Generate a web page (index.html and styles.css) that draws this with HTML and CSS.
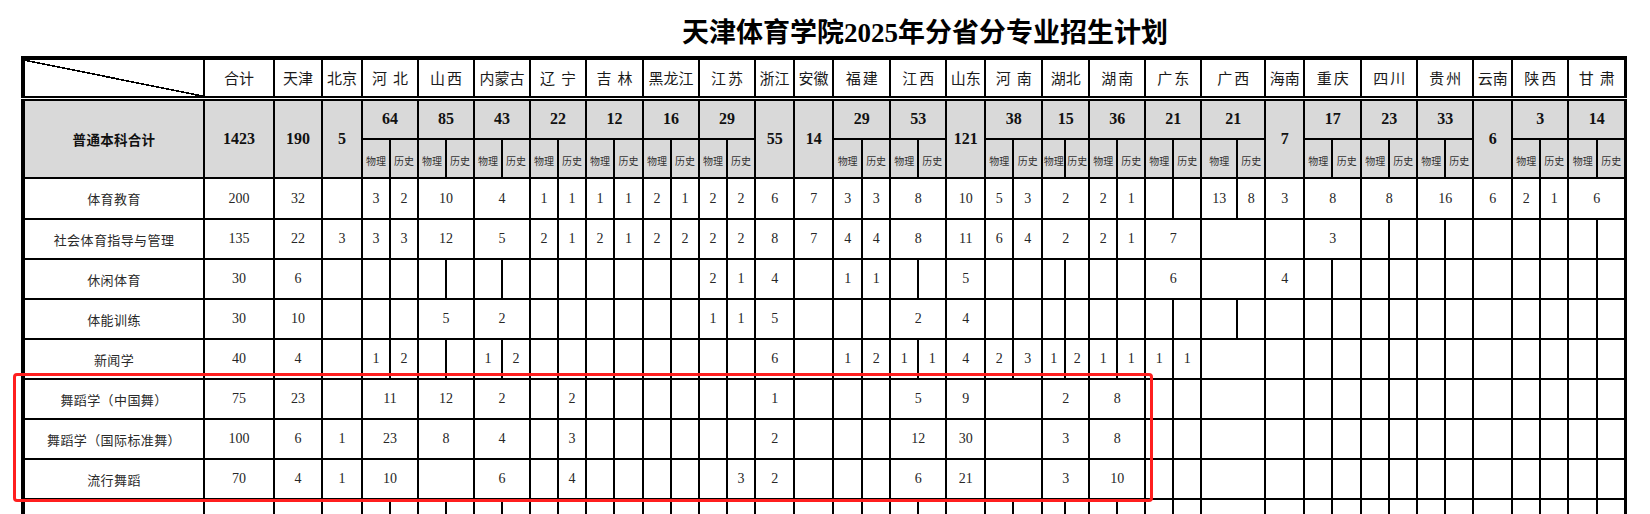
FILE: index.html
```html
<!DOCTYPE html>
<html lang="zh-CN">
<head>
<meta charset="utf-8">
<title>天津体育学院2025年分省分专业招生计划</title>
<link rel="stylesheet" href="styles.css">
</head>
<body>
<div class="page">
  <h1 class="title">天津体育学院2025年分省分专业招生计划</h1>
  <table class="plan">
    <colgroup>
      <col class="c-label"><col class="c-sum"><col class="c-tj"><col class="c-bj">
      <col class="c28"><col class="c28">
      <col class="c28"><col class="c28">
      <col class="c28"><col class="c28">
      <col class="c28"><col class="c28">
      <col class="c28"><col class="c29">
      <col class="c28"><col class="c28">
      <col class="c28"><col class="c28">
      <col class="c39"><col class="c39">
      <col class="c29"><col class="c28">
      <col class="c28"><col class="c28">
      <col class="c39">
      <col class="c28"><col class="c29">
      <col class="c23"><col class="c24">
      <col class="c28"><col class="c28">
      <col class="c28"><col class="c28">
      <col class="c36"><col class="c28">
      <col class="c39">
      <col class="c28"><col class="c29">
      <col class="c28"><col class="c28">
      <col class="c28"><col class="c28">
      <col class="c39">
      <col class="c28"><col class="c28">
      <col class="c29"><col class="c28">
    </colgroup>
    <tbody>
      <tr class="names">
        <td class="diag"></td><td>合计</td><td>天津</td><td>北京</td>
        <td colspan="2" class="ws">河北</td><td colspan="2" class="wm">山西</td><td colspan="2">内蒙古</td><td colspan="2" class="ws">辽宁</td>
        <td colspan="2" class="ws">吉林</td><td colspan="2">黑龙江</td><td colspan="2" class="wm">江苏</td><td>浙江</td><td>安徽</td>
        <td colspan="2" class="wm">福建</td><td colspan="2" class="wm">江西</td><td>山东</td><td colspan="2" class="ws">河南</td>
        <td colspan="2">湖北</td><td colspan="2" class="wm">湖南</td><td colspan="2" class="wm">广东</td><td colspan="2" class="wm">广西</td>
        <td>海南</td><td colspan="2" class="wm">重庆</td><td colspan="2" class="wm">四川</td><td colspan="2" class="wm">贵州</td>
        <td>云南</td><td colspan="2" class="wm">陕西</td><td colspan="2" class="ws">甘肃</td>
      </tr>
      <tr class="tot">
        <td rowspan="2" class="sum-label">普通本科合计</td><td rowspan="2">1423</td><td rowspan="2">190</td><td rowspan="2">5</td>
        <td colspan="2">64</td><td colspan="2">85</td><td colspan="2">43</td><td colspan="2">22</td>
        <td colspan="2">12</td><td colspan="2">16</td><td colspan="2">29</td><td rowspan="2">55</td><td rowspan="2">14</td>
        <td colspan="2">29</td><td colspan="2">53</td><td rowspan="2">121</td><td colspan="2">38</td>
        <td colspan="2">15</td><td colspan="2">36</td><td colspan="2">21</td><td colspan="2">21</td>
        <td rowspan="2">7</td><td colspan="2">17</td><td colspan="2">23</td><td colspan="2">33</td>
        <td rowspan="2">6</td><td colspan="2">3</td><td colspan="2">14</td>
      </tr>
      <tr class="subs">
        <td>物理</td><td>历史</td><td>物理</td><td>历史</td><td>物理</td><td>历史</td><td>物理</td><td>历史</td>
        <td>物理</td><td>历史</td><td>物理</td><td>历史</td><td>物理</td><td>历史</td>
        <td>物理</td><td>历史</td><td>物理</td><td>历史</td>
        <td>物理</td><td>历史</td><td>物理</td><td>历史</td><td>物理</td><td>历史</td><td>物理</td><td>历史</td><td>物理</td><td>历史</td>
        <td>物理</td><td>历史</td><td>物理</td><td>历史</td><td>物理</td><td>历史</td>
        <td>物理</td><td>历史</td><td>物理</td><td>历史</td>
      </tr>
      <tr class="row first">
        <td class="l">体育教育</td><td>200</td><td>32</td><td></td>
        <td>3</td><td>2</td><td colspan="2">10</td><td colspan="2">4</td><td>1</td><td>1</td>
        <td>1</td><td>1</td><td>2</td><td>1</td><td>2</td><td>2</td><td>6</td><td>7</td>
        <td>3</td><td>3</td><td colspan="2">8</td><td>10</td><td>5</td><td>3</td>
        <td colspan="2">2</td><td>2</td><td>1</td><td></td><td></td><td>13</td><td>8</td>
        <td>3</td><td colspan="2">8</td><td colspan="2">8</td><td colspan="2">16</td>
        <td>6</td><td>2</td><td>1</td><td colspan="2">6</td>
      </tr>
      <tr class="row">
        <td class="l">社会体育指导与管理</td><td>135</td><td>22</td><td>3</td>
        <td>3</td><td>3</td><td colspan="2">12</td><td colspan="2">5</td><td>2</td><td>1</td>
        <td>2</td><td>1</td><td>2</td><td>2</td><td>2</td><td>2</td><td>8</td><td>7</td>
        <td>4</td><td>4</td><td colspan="2">8</td><td>11</td><td>6</td><td>4</td>
        <td colspan="2">2</td><td>2</td><td>1</td><td colspan="2">7</td><td colspan="2"></td>
        <td></td><td colspan="2">3</td><td></td><td></td><td></td><td></td>
        <td></td><td></td><td></td><td></td><td></td>
      </tr>
      <tr class="row">
        <td class="l">休闲体育</td><td>30</td><td>6</td><td></td>
        <td></td><td></td><td></td><td></td><td></td><td></td><td></td><td></td>
        <td></td><td></td><td></td><td></td><td>2</td><td>1</td><td>4</td><td></td>
        <td>1</td><td>1</td><td></td><td></td><td>5</td><td></td><td></td>
        <td></td><td></td><td></td><td></td><td colspan="2">6</td><td colspan="2"></td>
        <td>4</td><td></td><td></td><td></td><td></td><td></td><td></td>
        <td></td><td></td><td></td><td></td><td></td>
      </tr>
      <tr class="row">
        <td class="l">体能训练</td><td>30</td><td>10</td><td></td>
        <td></td><td></td><td colspan="2">5</td><td colspan="2">2</td><td></td><td></td>
        <td></td><td></td><td></td><td></td><td>1</td><td>1</td><td>5</td><td></td>
        <td></td><td></td><td colspan="2">2</td><td>4</td><td></td><td></td>
        <td></td><td></td><td></td><td></td><td></td><td></td><td></td><td></td>
        <td></td><td></td><td></td><td></td><td></td><td></td><td></td>
        <td></td><td></td><td></td><td></td><td></td>
      </tr>
      <tr class="row">
        <td class="l">新闻学</td><td>40</td><td>4</td><td></td>
        <td>1</td><td>2</td><td></td><td></td><td>1</td><td>2</td><td></td><td></td>
        <td></td><td></td><td></td><td></td><td></td><td></td><td>6</td><td></td>
        <td>1</td><td>2</td><td>1</td><td>1</td><td>4</td><td>2</td><td>3</td>
        <td>1</td><td>2</td><td>1</td><td>1</td><td>1</td><td>1</td><td colspan="2"></td>
        <td></td><td></td><td></td><td></td><td></td><td></td><td></td>
        <td></td><td></td><td></td><td></td><td></td>
      </tr>
      <tr class="row">
        <td class="l">舞蹈学（中国舞）</td><td>75</td><td>23</td><td></td>
        <td colspan="2">11</td><td colspan="2">12</td><td colspan="2">2</td><td></td><td>2</td>
        <td></td><td></td><td></td><td></td><td></td><td></td><td>1</td><td></td>
        <td></td><td></td><td colspan="2">5</td><td>9</td><td colspan="2"></td>
        <td colspan="2">2</td><td colspan="2">8</td><td></td><td></td><td colspan="2"></td>
        <td></td><td></td><td></td><td></td><td></td><td></td><td></td>
        <td></td><td></td><td></td><td></td><td></td>
      </tr>
      <tr class="row">
        <td class="l">舞蹈学（国际标准舞）</td><td>100</td><td>6</td><td>1</td>
        <td colspan="2">23</td><td colspan="2">8</td><td colspan="2">4</td><td></td><td>3</td>
        <td></td><td></td><td></td><td></td><td></td><td></td><td>2</td><td></td>
        <td></td><td></td><td colspan="2">12</td><td>30</td><td colspan="2"></td>
        <td colspan="2">3</td><td colspan="2">8</td><td></td><td></td><td colspan="2"></td>
        <td></td><td></td><td></td><td></td><td></td><td></td><td></td>
        <td></td><td></td><td></td><td></td><td></td>
      </tr>
      <tr class="row">
        <td class="l">流行舞蹈</td><td>70</td><td>4</td><td>1</td>
        <td colspan="2">10</td><td colspan="2"></td><td colspan="2">6</td><td></td><td>4</td>
        <td></td><td></td><td></td><td></td><td></td><td>3</td><td>2</td><td></td>
        <td></td><td></td><td colspan="2">6</td><td>21</td><td colspan="2"></td>
        <td colspan="2">3</td><td colspan="2">10</td><td></td><td></td><td colspan="2"></td>
        <td></td><td></td><td></td><td></td><td></td><td></td><td></td>
        <td></td><td></td><td></td><td></td><td></td>
      </tr>
      <tr class="row">
        <td class="l"></td><td></td><td></td><td></td>
        <td></td><td></td><td></td><td></td><td></td><td></td><td></td><td></td>
        <td></td><td></td><td></td><td></td><td></td><td></td><td></td><td></td>
        <td></td><td></td><td></td><td></td><td></td><td></td><td></td>
        <td></td><td></td><td></td><td></td><td></td><td></td><td colspan="2"></td>
        <td></td><td></td><td></td><td></td><td></td><td></td><td></td>
        <td></td><td></td><td></td><td></td><td></td>
      </tr>
    </tbody>
  </table>
  <div class="mark" aria-hidden="true"></div>
</div>
</body>
</html>
```
FILE: styles.css
```css
* {
  box-sizing: border-box;
}

html, body {
  margin: 0;
  padding: 0;
  background: #ffffff;
}

body {
  font-family: "Liberation Serif", "Noto Sans CJK SC", serif;
  color: #111111;
}

.page {
  position: relative;
  width: 1650px;
  height: 514px;
  padding-left: 21px;
  overflow: hidden;
}

.title {
  margin: 0;
  height: 56px;
  padding: 18px 0 0 661px;
  font-size: 27px;
  line-height: 30px;
  font-weight: 700;
  white-space: nowrap;
  color: #000000;
}

.plan {
  border-collapse: collapse;
  table-layout: fixed;
  width: 1606px;
  border-top: 4px solid #000;
  border-left: 4px solid #000;
  border-right: 3px solid #000;
}

.c-label { width: 181px; }
.c-sum { width: 70px; }
.c-tj { width: 48px; }
.c-bj { width: 40px; }
.c23 { width: 23px; }
.c24 { width: 24px; }
.c28 { width: 28px; }
.c29 { width: 29px; }
.c36 { width: 36px; }
.c39 { width: 39px; }

.plan td {
  border: 2px solid #000;
  padding: 0;
  text-align: center;
  vertical-align: middle;
  font-size: 14px;
  color: #262626;
  white-space: nowrap;
  overflow: hidden;
}

.plan tr.names { height: 40px; }
.plan tr.tot { height: 41px; }
.plan tr.subs { height: 39px; }
.plan tr.row { height: 40px; }
.plan tr.row.first { height: 41px; }

.plan .names td {
  font-size: 15px;
  color: #1a1a1a;
}

.plan .names td.ws {
  letter-spacing: 6px;
  text-indent: 6px;
}

.plan .names td.wm {
  letter-spacing: 2px;
  text-indent: 2px;
}

.plan .diag {
  background: linear-gradient(to top right,
    transparent calc(50% - 1px),
    #000 calc(50% - 1px),
    #000 calc(50% + 0.6px),
    transparent calc(50% + 0.6px));
}

.plan .tot td,
.plan .subs td {
  background: #d9d9d9;
}

.plan .tot td {
  border-top: 5px double #000;
  font-size: 16px;
  font-weight: 700;
  color: #111;
}

.plan .tot td.sum-label {
  font-size: 13.5px;
  letter-spacing: 0.3px;
}

.plan .subs td {
  font-size: 10px;
  color: #333;
  padding-top: 3px;
}

.plan td.l {
  font-size: 13px;
  letter-spacing: 0.4px;
  color: #2a2a2a;
}

.mark {
  position: absolute;
  left: 13px;
  top: 373px;
  width: 1140px;
  height: 129px;
  border: 3px solid #ff1f1f;
  border-radius: 4px;
  pointer-events: none;
}
```
